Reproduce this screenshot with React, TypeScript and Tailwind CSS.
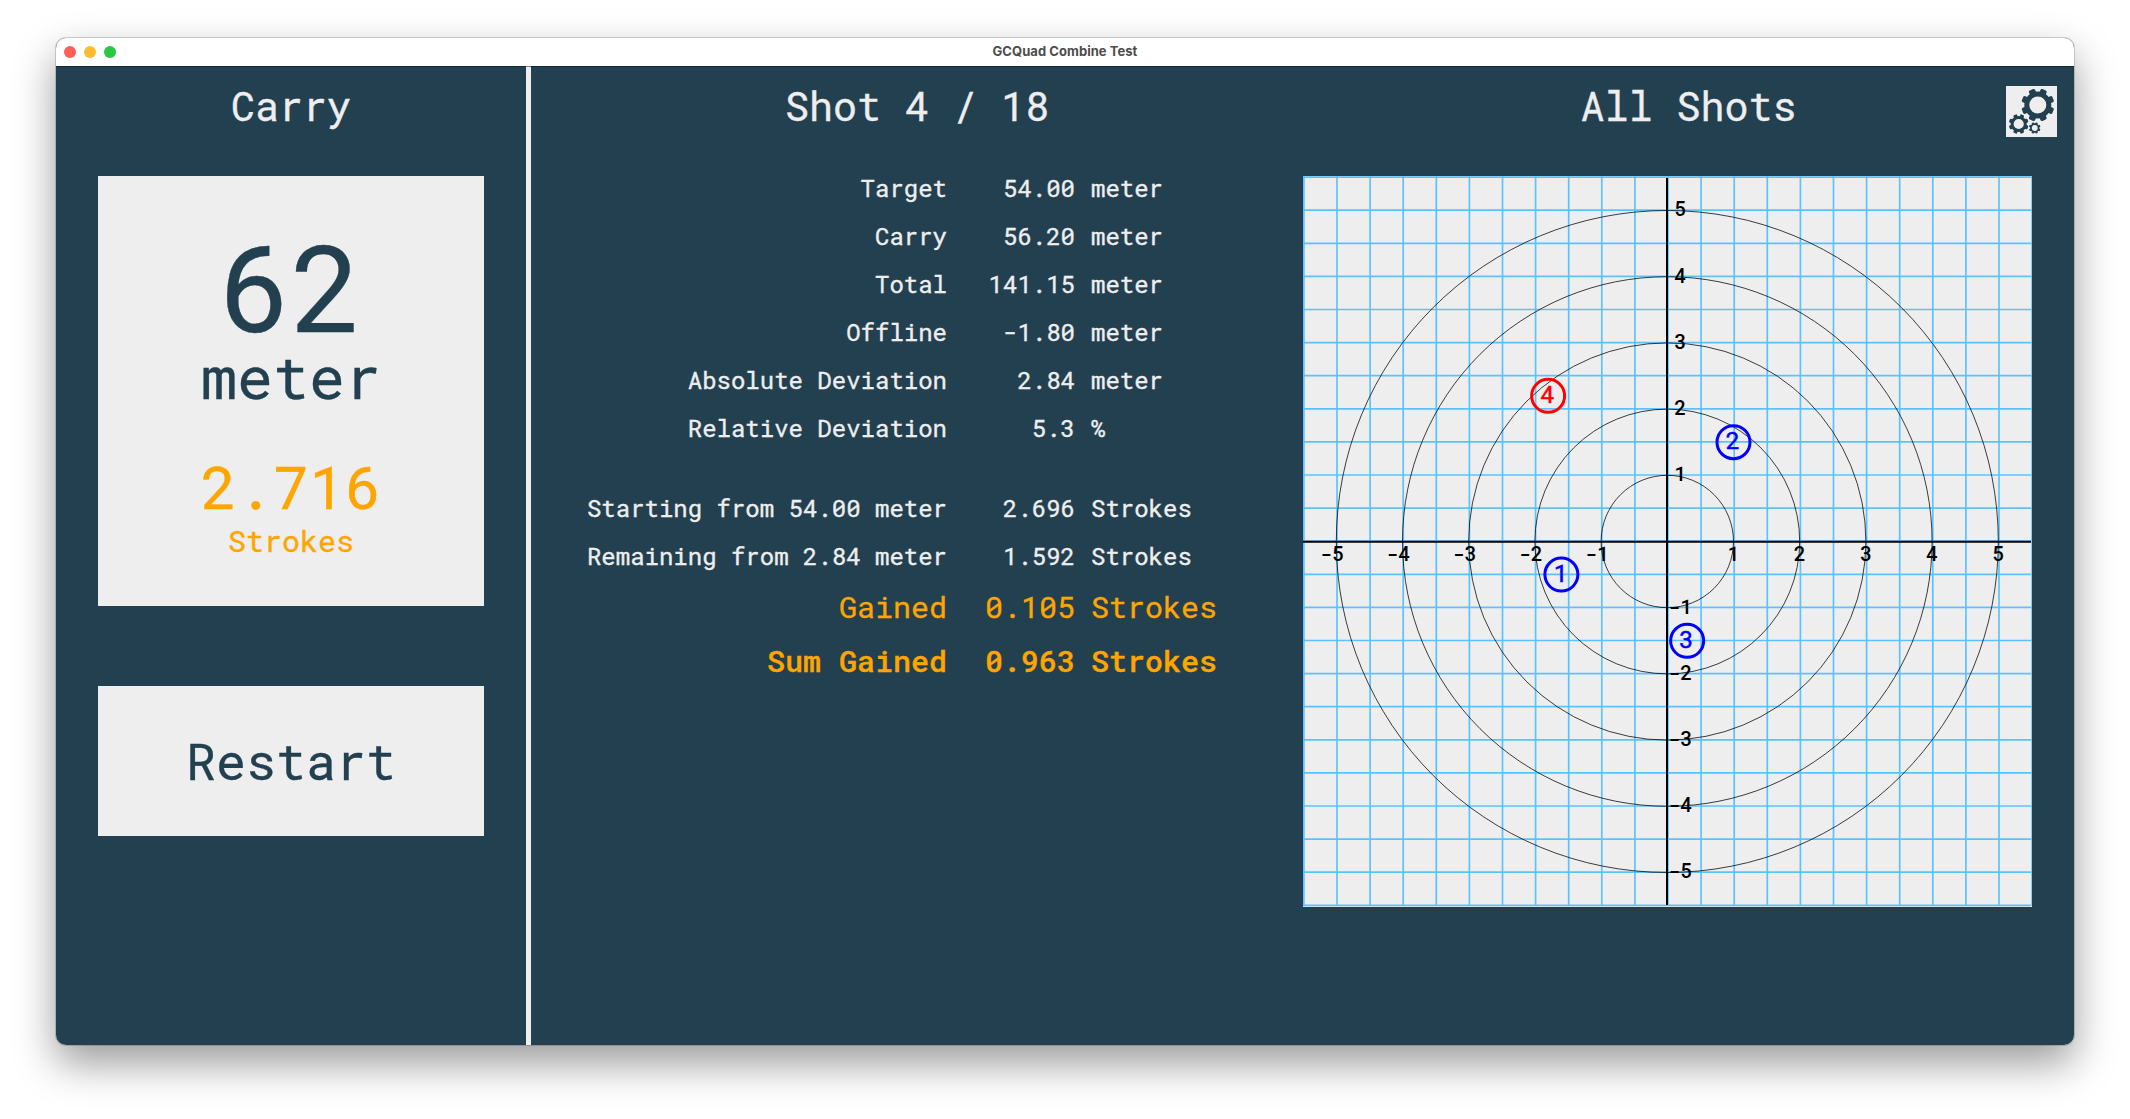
const stats = [
  { label: "Target", value: "54.00", unit: "meter" },
  { label: "Carry", value: "56.20", unit: "meter" },
  { label: "Total", value: "141.15", unit: "meter" },
  { label: "Offline", value: "-1.80", unit: "meter" },
  { label: "Absolute Deviation", value: "2.84", unit: "meter" },
  { label: "Relative Deviation", value: "5.3", unit: "%" },
];

const strokes = [
  { label: "Starting from 54.00 meter", value: "2.696", unit: "Strokes" },
  { label: "Remaining from 2.84 meter", value: "1.592", unit: "Strokes" },
];

const shots = [
  { n: 1, x: -1.6, y: -0.5, color: "#0000ff" },
  { n: 2, x: 1, y: 1.5, color: "#0000ff" },
  { n: 3, x: 0.3, y: -1.5, color: "#0000ff" },
  { n: 4, x: -1.8, y: 2.2, color: "#ff0000" },
];

type RowProps = { label: string; value: string; unit: string; className?: string };

function Row({ label, value, unit, className = "text-2xl leading-[48px]" }: RowProps) {
  return (
    <div className={`grid grid-cols-[416px_128px_1fr] whitespace-pre ${className}`}>
      <span className="text-right">{label}</span>
      <span className="text-right">{value}</span>
      <span className="pl-4">{unit}</span>
    </div>
  );
}

function Gear({ x, y, scale }: { x: number; y: number; scale: number }) {
  return (
    <g transform={`translate(${x} ${y}) scale(${scale})`}>
      <circle r="11" fill="none" stroke="#234050" strokeWidth="5" />
      {[0, 1, 2, 3, 4, 5, 6, 7].map((i) => (
        <rect
          key={i}
          x="-3.3"
          y="-16.5"
          width="6.6"
          height="5.8"
          rx="1.6"
          fill="#234050"
          transform={`rotate(${22.5 + i * 45})`}
        />
      ))}
    </g>
  );
}

function SettingsButton() {
  return (
    <button className="mr-[17px] mt-5 size-[51px] justify-self-end bg-[#eeeeee]">
      <svg viewBox="0 0 51 51" className="size-full">
        <Gear x={31.8} y={19} scale={1} />
        <Gear x={12.7} y={38} scale={0.6} />
        <Gear x={28.7} y={42} scale={0.35} />
      </svg>
    </button>
  );
}

const CX = 364.3;
const CY = 365.5;
const UNIT = 66.2;
const gridSteps = Array.from({ length: 23 }, (_, i) => i);
const rings = [1, 2, 3, 4, 5];
const ticks = [-5, -4, -3, -2, -1, 1, 2, 3, 4, 5];

function ShotChart() {
  return (
    <svg viewBox="0 0 729 731" className="ml-auto mr-[42px] block h-[731px] w-[729px] bg-[#eeeeee]">
      <g stroke="#5ac3ff" strokeWidth="1.7">
        {gridSteps.map((i) => (
          <line key={`v${i}`} x1={0.9 + i * 33.1} x2={0.9 + i * 33.1} y1="0" y2="729" />
        ))}
        {gridSteps.map((i) => (
          <line key={`h${i}`} x1="0" x2="728.5" y1={1.1 + i * 33.1} y2={1.1 + i * 33.1} />
        ))}
      </g>
      <g fill="none" stroke="#000" strokeWidth="0.75">
        {rings.map((r) => (
          <circle key={r} cx={CX} cy={CY} r={r * UNIT} />
        ))}
      </g>
      <g stroke="#000" strokeWidth="2">
        <line x1="364" x2="364" y1="2" y2="729" />
        <line x1="0" x2="728" y1="365.8" y2="365.8" />
      </g>
      <g className="font-medium" fontSize="20" textAnchor="middle" fill="#000">
        {ticks.map((t) => (
          <text key={`x${t}`} x={CX + t * UNIT + (t < 0 ? -4.2 : 0)} y="384.8">
            {t}
          </text>
        ))}
        {ticks.map((t) => (
          <text key={`y${t}`} x="377.2" y={CY - t * UNIT + 5.8}>
            {t}
          </text>
        ))}
      </g>
      {shots.map((s) => (
        <g key={s.n} transform={`translate(${CX + s.x * UNIT} ${CY - s.y * UNIT})`}>
          <circle r="16.5" fill="none" stroke={s.color} strokeWidth="3" />
          <text
            x="-0.6"
            y="7"
            fontSize="24"
            textAnchor="middle"
            fill={s.color}
            stroke={s.color}
            strokeWidth="0.5"
          >
            {s.n}
          </text>
        </g>
      ))}
    </svg>
  );
}

export default function App() {
  return (
    <div className="h-[1119px] w-[2130px] overflow-hidden bg-white pl-14 pt-[38px]">
      <div className="h-[1007px] w-[2018px] rounded-[10px] shadow-[0_0_0_1px_rgba(0,0,0,0.16),0_18px_42px_rgba(0,0,0,0.4)]">
        <div className="flex h-full flex-col overflow-hidden rounded-[10px] bg-[#234050]">
          <div className="relative z-10 grid h-7 shrink-0 grid-cols-[1fr_auto_1fr] items-center bg-white shadow-[0_1px_0_rgba(0,20,30,0.5)]">
            <div className="flex gap-2 pl-2">
              <span className="size-3 rounded-full bg-[#ff5f57]" />
              <span className="size-3 rounded-full bg-[#febc2e]" />
              <span className="size-3 rounded-full bg-[#28c840]" />
            </div>
            <span className="font-['Inter',sans-serif] text-[13px] font-bold tracking-[0.05px] text-[#4c4c4c]">
              GCQuad Combine Test
            </span>
          </div>

          <div className="flex flex-1 font-['Roboto_Mono','DejaVu_Sans_Mono',monospace] text-[#eeeeee] [-webkit-text-stroke-width:0.35px]">
            <aside className="w-[475px] border-r-[5px] border-[#eeeeee] px-[42px]">
              <h2 className="h-[110px] text-center text-[40px] leading-[79px]">Carry</h2>
              <div className="h-[430px] bg-[#eeeeee] pt-[50px] text-center text-[#234050]">
                <div className="text-[120px] leading-[119px]">62</div>
                <div className="text-[60px] leading-[61px]">meter</div>
                <div className="mt-[49px] text-[60px] leading-[61px] text-[#ffa500]">2.716</div>
                <div className="mt-1 text-[30px] leading-[41px] text-[#ffa500]">Strokes</div>
              </div>
              <button className="mt-20 block h-[150px] w-full bg-[#eeeeee] text-[50px] leading-[150px] text-[#234050]">
                Restart
              </button>
            </aside>

            <main className="w-[772px]">
              <h2 className="h-[98px] text-center text-[40px] leading-[79px]">Shot 4 / 18</h2>
              {stats.map((r) => (
                <Row key={r.label} {...r} />
              ))}
              <div className="mt-8">
                {strokes.map((r) => (
                  <Row key={r.label} {...r} />
                ))}
                <Row
                  label="Gained"
                  value="0.105"
                  unit="Strokes"
                  className="text-[30px] leading-[53px] text-[#ffa500]"
                />
                <Row
                  label="Sum Gained"
                  value="0.963"
                  unit="Strokes"
                  className="text-[30px] leading-[55px] font-medium text-[#ffa500]"
                />
              </div>
            </main>

            <section className="flex-1 [-webkit-text-stroke-width:0.35px]">
              <div className="grid h-[110px] grid-cols-[1fr_auto_1fr] items-start">
                <span />
                <h2 className="text-[40px] leading-[79px]">All Shots</h2>
                <SettingsButton />
              </div>
              <ShotChart />
            </section>
          </div>
        </div>
      </div>
    </div>
  );
}
